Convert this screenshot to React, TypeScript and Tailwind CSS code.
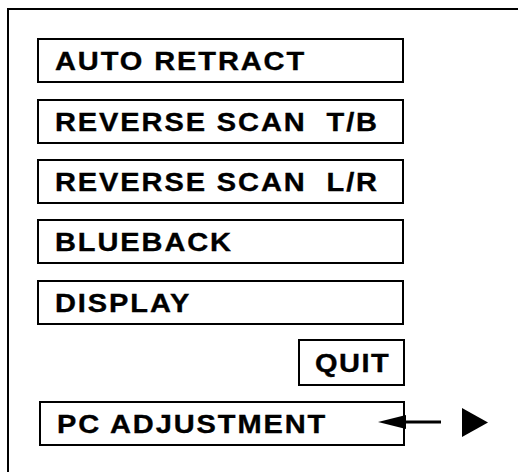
import React from "react";

const font = { fontFamily: '"Liberation Sans", Arial, sans-serif' };

function Box({ children, className = "" }: { children: React.ReactNode; className?: string }) {
  return (
    <div
      className={`h-[45px] border-2 border-black flex items-center pl-[16px] font-bold text-[29px] leading-none tracking-[1.9px] text-black whitespace-pre [-webkit-text-stroke:0.4px_black] ${className}`}
    >
      <span className="inline-block scale-y-[0.92] translate-y-[1px]">{children}</span>
    </div>
  );
}

export default function App() {
  return (
    <div className="w-[518px] h-[472px] bg-white overflow-hidden" style={font}>
      <div className="ml-[7px] mt-[8px] h-[464px] border-t-2 border-l-2 border-black pl-[28px] pt-[28px] flex flex-col">
        <Box className="w-[367px]">AUTO RETRACT</Box>
        <Box className="w-[367px] mt-[16px]">REVERSE SCAN  T/B</Box>
        <Box className="w-[367px] mt-[15px]">REVERSE SCAN  L/R</Box>
        <Box className="w-[367px] mt-[15px]">BLUEBACK</Box>
        <Box className="w-[367px] mt-[16px]">DISPLAY</Box>
        <div className="ml-[261px] mt-[14px] w-[107px] h-[47px] border-2 border-black flex items-center pl-[15px] font-bold text-[29px] leading-none tracking-[1.5px] text-black [-webkit-text-stroke:0.4px_black]">
          <span className="inline-block scale-y-[0.92] translate-y-[1px]">QUIT</span>
        </div>
        <div className="relative ml-[2px] mt-[15px]">
          <Box className="w-[366px]">PC ADJUSTMENT</Box>
          <svg
            className="absolute left-[339px] top-[5px]"
            width="112"
            height="32"
            viewBox="0 0 112 32"
          >
            <polygon points="0,16 28,9 28,23" fill="black" />
            <rect x="26" y="14.5" width="37" height="3" fill="black" />
            <polygon points="84,2 110,16.5 84,31" fill="black" />
          </svg>
        </div>
      </div>
    </div>
  );
}
